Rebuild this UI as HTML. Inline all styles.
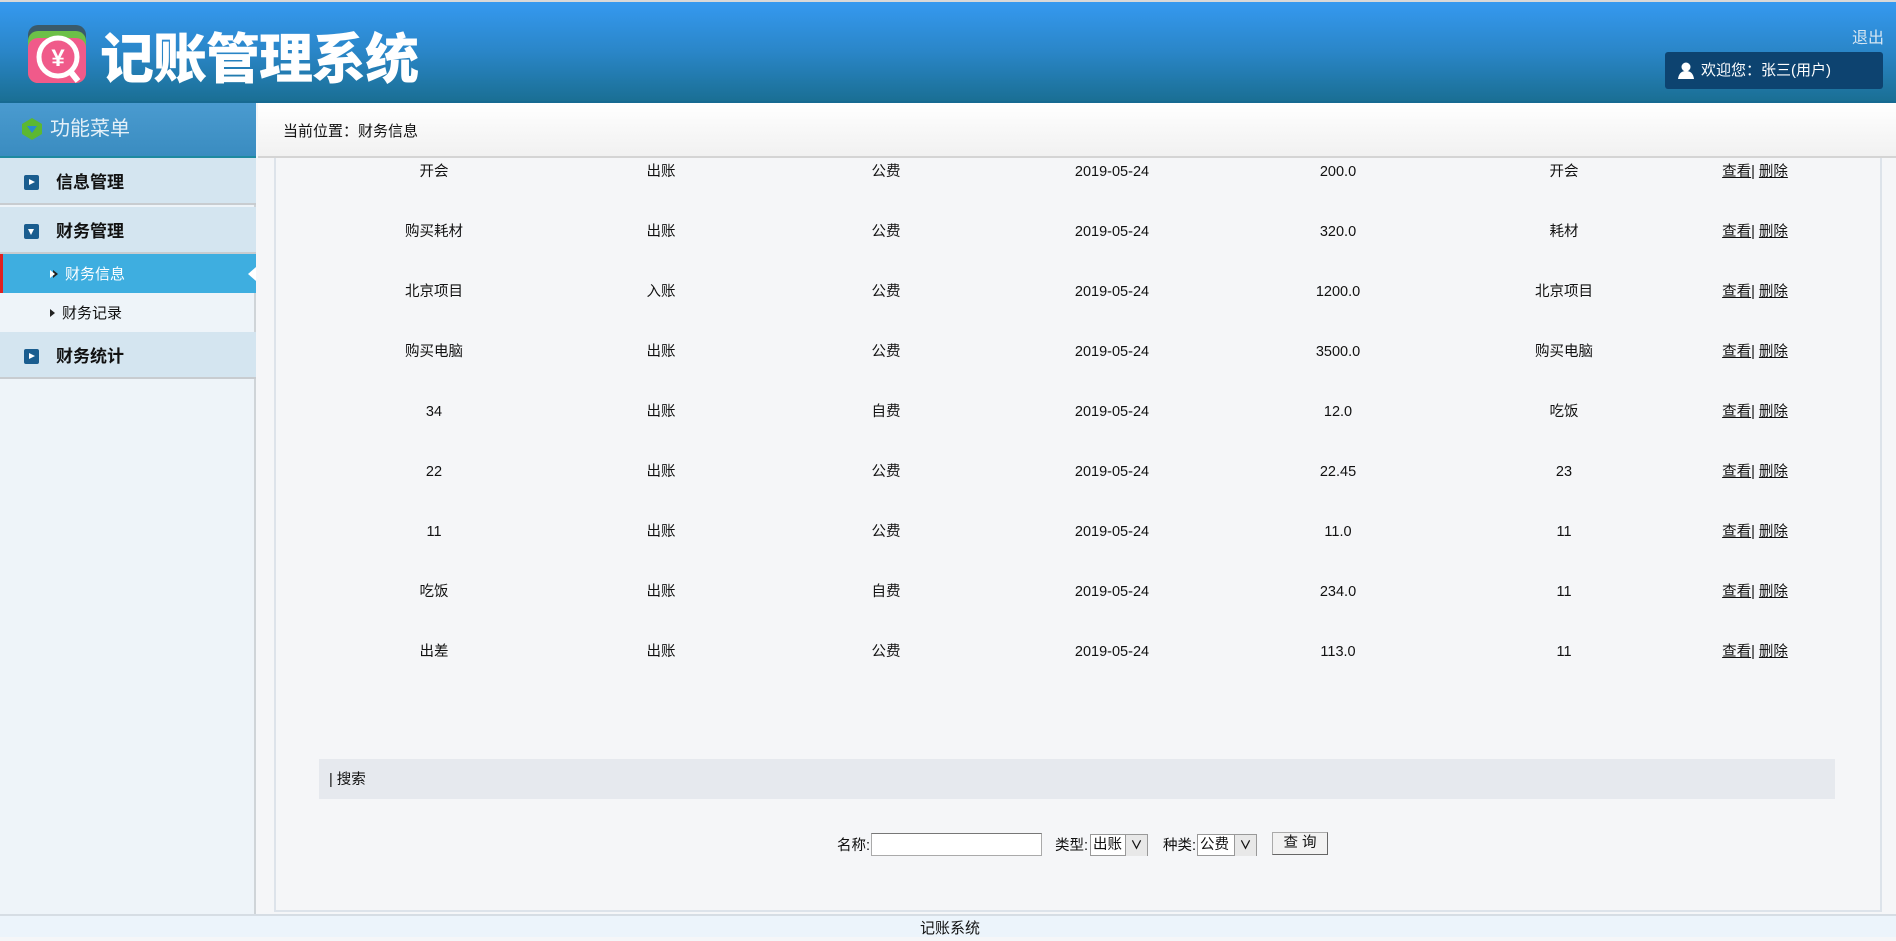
<!DOCTYPE html>
<html><head><meta charset="utf-8"><style>
*{margin:0;padding:0;box-sizing:border-box}
body{width:1896px;height:937px;overflow:hidden;position:relative;background:#f5f6f8;font-family:"Liberation Sans","Noto Sans CJK SC",sans-serif;font-size:14px;color:#111}
.abs{position:absolute}
#top{left:0;top:0;width:1896px;height:2px;background:#d8d8d8}
#hdr{left:0;top:2px;width:1896px;height:101px;background:linear-gradient(#3599f0,#2a86c8 50%,#1a6f94);border-bottom:2px solid #176a92}
#title{left:100px;top:20px;color:#fff;font-size:54px;font-weight:900;letter-spacing:-1px;font-family:"Noto Sans CJK SC",sans-serif;line-height:70px}
#logout{left:1852px;top:24px;color:#d6e6f2;font-size:16px}
#welcome{left:1665px;top:52px;width:218px;height:37px;background:#0d4370;border-radius:3px;color:#fff;font-size:15px;line-height:37px;padding-left:36px}
#side{left:0;top:103px;width:256px;height:811px;background:#eef4f9;border-right:2px solid #cfd4d8}
#menuh{left:0;top:103px;width:256px;height:55px;background:linear-gradient(#4a9bd0,#3a8cc0);border-bottom:2px solid #1e8aa0;color:#e4f0f8;font-size:20px;line-height:52px;padding-left:50px}
.mi{left:0;width:256px;height:47px;background:#d4e5f0;border-bottom:2px solid #c8ccd0;font-weight:bold;font-size:17px;line-height:50px;padding-left:56px}
.mi i{position:absolute;left:24px;top:17px;width:15px;height:15px;background:#1a5d8f;border-radius:2px}
.mi i:after{content:"";position:absolute;left:5px;top:4px;border-left:6px solid #fff;border-top:3.5px solid transparent;border-bottom:3.5px solid transparent}
.mi i.d:after{left:4px;top:5px;border-top:6px solid #fff;border-left:3.5px solid transparent;border-right:3.5px solid transparent;border-bottom:0}
.sub{left:0;width:256px;height:39px;line-height:41px;padding-left:62px;font-size:15px}
.sub:before{content:"";position:absolute;left:50px;top:16px;border-left:5px solid #222;border-top:4px solid transparent;border-bottom:4px solid transparent}
#crumb{left:258px;top:103px;width:1638px;height:55px;background:linear-gradient(#fff,#f1f1f1);border-bottom:2px solid #d4d4d4;font-size:15px;line-height:57px;padding-left:25px}
#box{left:274px;top:158px;width:1608px;height:754px;border-left:2px solid #dde3ea;border-right:2px solid #dde3ea;border-bottom:2px solid #dde3ea}
.c{position:absolute;width:220px;text-align:center;font-size:14.5px;line-height:22px;height:22px}
.c a{color:#111;text-decoration:underline}
#sbar{left:319px;top:759px;width:1516px;height:40px;background:#e6e9ee;line-height:42px;padding-left:10px;font-size:14.5px}
#foot{left:0;top:914px;width:1896px;height:23px;background:#ecf4fb;border-top:2px solid #d6dde4;text-align:center;line-height:25px;font-size:15px;padding-left:4px}
.f{position:absolute;font-size:14.5px;top:834px}
.inp{position:absolute;background:#fff;border:1px solid #aaa;border-top-color:#777}
.sel{position:absolute;background:#fff;border:1px solid #999;font-size:14.5px;line-height:20px;padding-left:2px}
.sel b{position:absolute;right:0;top:0;width:22px;height:21px;background:#e8e8e8;border-left:1px solid #999;font-weight:bold;text-align:center;font-size:12px}
</style></head><body>
<div class="abs" id="top"></div>
<div class="abs" id="hdr"></div>
<svg class="abs" style="left:28px;top:25px" width="60" height="60" viewBox="0 0 60 60">
<rect x="0" y="0" width="58" height="58" rx="10" fill="#3a5a6a"/>
<rect x="0" y="6" width="58" height="52" rx="10" fill="#6cc048"/>
<rect x="0" y="13" width="58" height="45" rx="10" fill="#f05a8a"/>
<circle cx="30" cy="32" r="19" fill="none" stroke="#fff" stroke-width="5"/>
<line x1="42" y1="46" x2="50" y2="56" stroke="#fff" stroke-width="6"/>
<text x="30" y="41" text-anchor="middle" fill="#fff" font-size="24" font-weight="bold" font-family="Liberation Sans">¥</text>
</svg>
<div class="abs" id="title">记账管理系统</div>
<div class="abs" id="logout">退出</div>
<div class="abs" id="welcome"><svg style="position:absolute;left:13px;top:10px" width="16" height="17" viewBox="0 0 16 17"><circle cx="8" cy="5" r="4.5" fill="#fff"/><path d="M0 17 Q1 9 8 9 Q15 9 16 17Z" fill="#fff"/></svg>欢迎您：张三(用户)</div>
<div class="abs" id="side"></div>
<div class="abs" id="menuh"><svg style="position:absolute;left:22px;top:15px" width="20" height="22" viewBox="0 0 20 22"><path d="M10 0L20 6V16L10 22L0 16V6Z" fill="#5cb832"/><path d="M5 8H15L10 15Z" fill="#2a8ad0"/></svg>功能菜单</div>
<div class="abs mi" style="top:158px"><i></i>信息管理</div>
<div class="abs mi" style="top:207px"><i class="d"></i>财务管理</div>
<div class="abs sub" style="top:254px;background:#3eaee0;color:#fff;border-left:3px solid #e02020">财务信息</div>
<div class="abs" style="left:50px;top:270px;border-left:5px solid #fff;border-top:4px solid transparent;border-bottom:4px solid transparent"></div>
<div class="abs" style="left:248px;top:267px;border-right:8px solid #fff;border-top:7px solid transparent;border-bottom:7px solid transparent"></div>
<div class="abs sub" style="top:293px">财务记录</div>
<div class="abs mi" style="top:332px"><i></i>财务统计</div>
<div class="abs" id="crumb">当前位置：财务信息</div>
<div class="abs" id="box"></div>
<div id="rows"></div>
<div class="abs" id="sbar">| 搜索</div>
<div class="f" style="left:837px">名称:</div>
<div class="inp" style="left:871px;top:833px;width:171px;height:23px"></div>
<div class="f" style="left:1055px">类型:</div>
<div class="sel" style="left:1090px;top:834px;width:58px;height:22px">出账<b>∨</b></div>
<div class="f" style="left:1163px">种类:</div>
<div class="sel" style="left:1197px;top:834px;width:60px;height:22px">公费<b>∨</b></div>
<div class="abs" style="left:1272px;top:832px;width:56px;height:23px;background:#f2f2f2;border:1px solid #aaa;border-bottom-color:#666;border-right-color:#666;text-align:center;line-height:21px;font-size:14.5px">查 询</div>
<div class="abs" id="foot">记账系统</div>
<script>
var d=[["开会","出账","公费","200.0","开会"],["购买耗材","出账","公费","320.0","耗材"],["北京项目","入账","公费","1200.0","北京项目"],["购买电脑","出账","公费","3500.0","购买电脑"],["34","出账","自费","12.0","吃饭"],["22","出账","公费","22.45","23"],["11","出账","公费","11.0","11"],["吃饭","出账","自费","234.0","11"],["出差","出账","公费","113.0","11"]];
var cx=[434,661,886,1112,1338,1564,1755],h="";
d.forEach(function(r,i){var y=170+i*60-9;var v=[r[0],r[1],r[2],"2019-05-24",r[3],r[4],'<a>查看</a>| <a>删除</a>'];
v.forEach(function(t,j){h+='<div class="c" style="left:'+(cx[j]-110)+'px;top:'+y+'px">'+t+'</div>'})});
document.getElementById("rows").innerHTML=h;
</script>
</body></html>
